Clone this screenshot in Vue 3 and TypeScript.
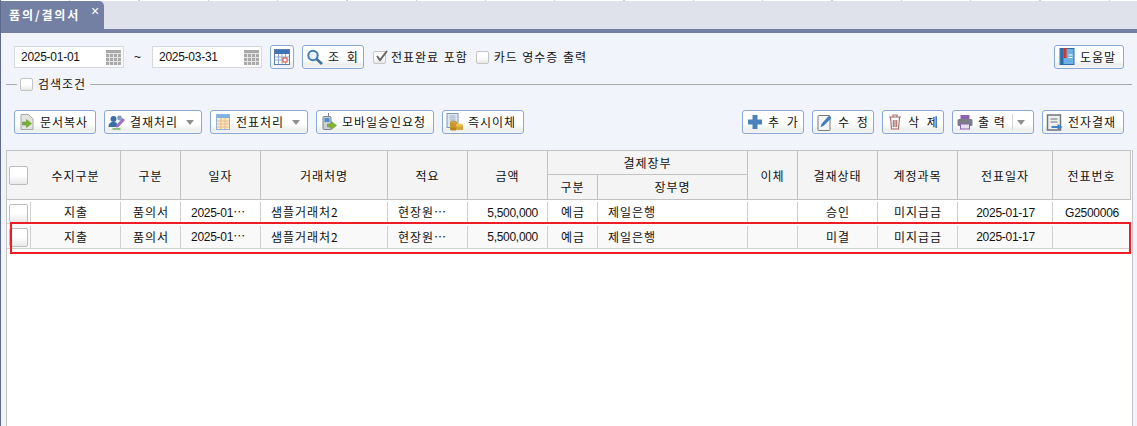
<script setup lang="ts">
interface Row {
  kind: string; type: string; date: string; vendor: string; memo: string; amount: string;
  pay: string; book: string; transfer: string; status: string; account: string; slipDate: string; slipNo: string;
}
const rows: Row[] = [
  { kind: '지출', type: '품의서', date: '2025-01⋯', vendor: '샘플거래처2', memo: '현장원⋯', amount: '5,500,000', pay: '예금', book: '제일은행', transfer: '', status: '승인', account: '미지급금', slipDate: '2025-01-17', slipNo: 'G2500006' },
  { kind: '지출', type: '품의서', date: '2025-01⋯', vendor: '샘플거래처2', memo: '현장원⋯', amount: '5,500,000', pay: '예금', book: '제일은행', transfer: '', status: '미결', account: '미지급금', slipDate: '2025-01-17', slipNo: '' },
]
const widths = [24, 90, 60, 80, 127, 80, 80, 50, 150, 50, 80, 80, 95, 78]
</script>

<template>
  <div class="page">
    <div class="tabbar">
      <div class="tab"><span>품의/결의서</span><i class="close">×</i></div>
    </div>
    <div class="strip"></div>

    <div class="row search">
      <div class="date">
        <span class="num">2025-01-01</span>
        <svg width="15" height="15" viewBox="0 0 15 15"><rect width="15" height="15" fill="#a9a9a9"/><path d="M0 3.5H15M0 7.5H15M0 11.5H15M3.5 3V15M7.5 3V15M11.5 3V15" stroke="#e4e4e4"/></svg>
      </div>
      <span class="tilde">~</span>
      <div class="date">
        <span class="num">2025-03-31</span>
        <svg width="15" height="15" viewBox="0 0 15 15"><rect width="15" height="15" fill="#a9a9a9"/><path d="M0 3.5H15M0 7.5H15M0 11.5H15M3.5 3V15M7.5 3V15M11.5 3V15" stroke="#e4e4e4"/></svg>
      </div>
      <button class="btn cal">
        <svg width="16" height="16" viewBox="0 0 16 16"><rect x=".5" y=".5" width="15" height="15" fill="#fff" stroke="#5b7db0"/><rect x="1" y="1" width="14" height="4" fill="#3f73b8"/><path d="M1 8H15M1 11H15M4.5 5V15M8 5V15M11.5 5V15" stroke="#8fa9cf"/><rect x="9" y="9" width="4" height="4" fill="#fff" stroke="#e0402c"/></svg>
      </button>
      <button class="btn w62 spaced">
        <svg width="17" height="17" viewBox="0 0 17 17"><circle cx="6.5" cy="6.5" r="4.7" fill="#eaf3fb" stroke="#3f7db5" stroke-width="2"/><path d="M10 10L15.5 15" stroke="#3f6f9f" stroke-width="2.6"/></svg>
        <span>조 회</span>
      </button>
      <label class="check first"><span class="box on"><svg width="15" height="15" viewBox="0 0 15 15"><path d="M3 7L6 11L13 2" fill="none" stroke="#666" stroke-width="2"/></svg></span><span>전표완료 포함</span></label>
      <label class="check second"><span class="box"></span><span>카드 영수증 출력</span></label>
      <button class="btn w70 push">
        <svg width="15" height="18" viewBox="0 0 15 18"><rect x=".5" y=".5" width="14" height="16" fill="#6db0e2" stroke="#2f6da8"/><rect x="1" y="1" width="3" height="15" fill="#2f6da8"/><rect x="4" y="0" width="3" height="10" fill="#e0302a"/><path d="M9 7H13M9 9.5H13" stroke="#fff"/></svg>
        <span>도움말</span>
      </button>
    </div>

    <div class="legend">
      <span class="dash"></span>
      <span class="box"></span>
      <span class="legend-text">검색조건</span>
      <span class="rule"></span>
    </div>

    <div class="row actions">
      <button class="btn w82">
        <svg width="17" height="18" viewBox="0 0 17 18"><path d="M2.5 1.5H10L14.5 6V16.5H2.5Z" fill="#e3e3e0" stroke="#a8a8a8"/><path d="M4 9H8V6.5L13 10.5L8 14.5V12H4Z" fill="#7cb334" stroke="#55882a" stroke-width=".5"/></svg>
        <span>문서복사</span>
      </button>
      <button class="btn w98">
        <svg width="17" height="16" viewBox="0 0 17 16"><circle cx="5" cy="5" r="3" fill="#3a6ea5"/><path d="M0 13C0 9 2 8 5 8S9 9 9 13Z" fill="#3a6ea5"/><circle cx="11" cy="4" r="2.4" fill="#7f9cc0"/><path d="M8 11L14 4L16.500 6L10 13L7.500 13.500Z" fill="#9a6fc0"/><path d="M4 15H12" stroke="#6fae5a" stroke-width="1.500"/></svg>
        <span>결재처리</span><i class="caret"></i>
      </button>
      <button class="btn w98">
        <svg width="14" height="16" viewBox="0 0 14 16"><rect x=".5" y=".5" width="13" height="15" fill="#fbe9c6" stroke="#8fb5dc"/><rect x="1" y="1" width="12" height="3" fill="#7fb2e2"/><path d="M1 7H13M1 10H13M1 13H13M5 4V15M9 4V15" stroke="#e7b98a"/></svg>
        <span>전표처리</span><i class="caret"></i>
      </button>
      <button class="btn w118">
        <svg width="17" height="18" viewBox="0 0 17 18"><rect x="2.500" y="3.500" width="8" height="13" rx="1" fill="#c9ced2" stroke="#7d858c"/><rect x="4" y="5" width="5" height="4" fill="#4a8fd1"/><path d="M8 0V3.500" stroke="#7d858c"/><path d="M7 11H11V8.500L16 12.500L11 16.500V14H7Z" fill="#84b52f" stroke="#5c8a20" stroke-width=".5"/></svg>
        <span>모바일승인요청</span>
      </button>
      <button class="btn w82">
        <svg width="17" height="18" viewBox="0 0 17 18"><rect x=".5" y=".5" width="11" height="14" fill="#dfe8f0" stroke="#7d97b5"/><path d="M3 3H9M3 5H9M3 7H9" stroke="#9fb0c0"/><ellipse cx="7" cy="10" rx="3.500" ry="2" fill="#d9a93e" stroke="#9a7420" stroke-width=".5"/><rect x="3.500" y="10" width="7" height="6" fill="#c9952e"/><ellipse cx="7" cy="16" rx="3.500" ry="1.500" fill="#b5851f"/><rect x="9.500" y="12" width="7" height="5" fill="#d8a436"/><ellipse cx="13" cy="12" rx="3.500" ry="1.500" fill="#eac35a"/></svg>
        <span>즉시이체</span>
      </button>

      <button class="btn w62 spaced push">
        <svg width="16" height="16" viewBox="0 0 16 16"><path d="M5.500 1H10.500V5.500H15V10.500H10.500V15H5.500V10.500H1V5.500H5.500Z" fill="#4a82bd"/></svg>
        <span>추 가</span>
      </button>
      <button class="btn w62 spaced">
        <svg width="15" height="17" viewBox="0 0 15 17"><rect x=".5" y="1.500" width="12" height="15" rx="1" fill="#f6f6f6" stroke="#7a7a7a"/><path d="M3 13L4 10L11.500 1.500L14 4L6 12Z" fill="#3f7fc4"/></svg>
        <span>수 정</span>
      </button>
      <button class="btn w62 spaced">
        <svg width="14" height="16" viewBox="0 0 14 16"><path d="M1 3H13M5 3V1H9V3M2.500 3.500L3.500 15H10.500L11.500 3.500M5.300 6V13M7 6V13M8.700 6V13" fill="none" stroke="#a36a68" stroke-width="1.100"/></svg>
        <span>삭 제</span>
      </button>
      <button class="btn w82">
        <svg width="17" height="16" viewBox="0 0 17 16"><rect x="4" y="1" width="9" height="5" fill="#8a63b5"/><rect x="1" y="5" width="15" height="7" rx="1.500" fill="#7b7f85"/><rect x="4" y="10" width="9" height="5" fill="#e8e2f0" stroke="#8a63b5"/></svg>
        <span>출 력</span><i class="sep"></i><i class="caret small"></i>
      </button>
      <button class="btn w82">
        <svg width="17" height="17" viewBox="0 0 17 17"><rect x="1" y="1" width="13" height="15" fill="#eef0f0" stroke="#6e7478" stroke-width="1.500"/><path d="M4 5H11M4 8H11" stroke="#6e7478"/><path d="M5 12H11V10L16 13L11 16V14H5Z" fill="#3f83c6"/></svg>
        <span>전자결재</span>
      </button>
    </div>

    <div class="grid-wrap">
      <table>
        <colgroup><col v-for="(w, i) in widths" :key="i" :width="w" /></colgroup>
        <thead>
          <tr>
            <th rowspan="2" class="nosep"><span class="box big"></span></th>
            <th rowspan="2">수지구분</th>
            <th rowspan="2">구분</th>
            <th rowspan="2">일자</th>
            <th rowspan="2">거래처명</th>
            <th rowspan="2">적요</th>
            <th rowspan="2">금액</th>
            <th colspan="2">결제장부</th>
            <th rowspan="2">이체</th>
            <th rowspan="2">결재상태</th>
            <th rowspan="2">계정과목</th>
            <th rowspan="2">전표일자</th>
            <th rowspan="2">전표번호</th>
          </tr>
          <tr>
            <th>구분</th>
            <th>장부명</th>
          </tr>
        </thead>
        <tbody>
          <tr v-for="(r, i) in rows" :key="i">
            <td><span class="box big"></span></td>
            <td class="c">{{ r.kind }}</td>
            <td class="c">{{ r.type }}</td>
            <td class="l"><span class="num">{{ r.date }}</span></td>
            <td class="l">{{ r.vendor }}</td>
            <td class="l">{{ r.memo }}</td>
            <td class="r"><span class="num amt">{{ r.amount }}</span></td>
            <td class="c">{{ r.pay }}</td>
            <td class="l">{{ r.book }}</td>
            <td class="c">{{ r.transfer }}</td>
            <td class="c">{{ r.status }}</td>
            <td class="c">{{ r.account }}</td>
            <td class="c"><span class="num">{{ r.slipDate }}</span></td>
            <td class="c"><span class="num">{{ r.slipNo }}</span></td>
          </tr>
        </tbody>
      </table>
      <div class="highlight"></div>
    </div>
  </div>
</template>

<style>
html, body { margin: 0; height: 100%; overflow: hidden; background: #f1f4fa; }
</style>

<style scoped>
.page {
  height: 426px;
  display: flex;
  flex-direction: column;
  background: #f1f4fa;
  border-left: 1px solid #5f6b8e;
  box-sizing: border-box;
  font: 12px/1 "Noto Sans CJK KR", "Liberation Sans", sans-serif;
  letter-spacing: .96px;
  color: #111;
}
.tabbar {
  height: 29px;
  box-sizing: border-box;
  padding-top: 1px;
  background:
    repeating-linear-gradient(90deg, #fff 0 68px, #c9ccd3 68px 69.3px) top left / 100% 1px no-repeat,
    #dfe2ea;
  flex: none;
}
.tab {
  width: 103px;
  height: 28px;
  box-sizing: border-box;
  background: #7480a3;
  border-radius: 0 5px 0 0;
  color: #fff;
  font-weight: 700;
  letter-spacing: 1.9px;
  padding: 8px 0 0 8px;
  display: flex;
  justify-content: space-between;
}
.close { font: 14px/1 "Liberation Sans", sans-serif; margin: -5px 3px 0 0; }
.strip { height: 4px; background: #7480a3; flex: none; }

.row { display: flex; align-items: center; padding: 0 13px 0 13px; flex: none; }
.search { margin-top: 12px; height: 24px; }
.actions { margin-top: 19px; height: 24px; gap: 8px; }

.num { font-family: "Liberation Sans", "Noto Sans CJK KR", sans-serif; letter-spacing: -.27px; }
.amt { letter-spacing: -.3px; }

.date {
  width: 110px;
  height: 22px;
  box-sizing: border-box;
  background: #fff;
  border: 1px solid #d5d8dd;
  display: flex;
  align-items: center;
  justify-content: space-between;
  padding: 0 2px 0 6px;
}
.tilde { width: 28px; text-align: center; font: 12px/1 "Liberation Sans", sans-serif; }

.btn {
  height: 24px;
  box-sizing: border-box;
  margin: 0;
  padding: 0 0 0 3px;
  display: flex;
  align-items: center;
  gap: 4px;
  background: linear-gradient(#fff 0 60%, #eceeee 85%, #f4f5f5 100%);
  border: 1px solid #8ba9d6;
  border-radius: 3px;
  font: inherit;
  letter-spacing: inherit;
  color: inherit;
  flex: none;
}
.btn svg { flex: none; width: 18px; }
.btn.push { margin-left: auto; }
.btn.cal { width: 24px; padding: 0; justify-content: center; margin: 0 8px; }
.btn.cal svg { width: 16px; }
.w62 { width: 62px; }
.w70 { width: 70px; }
.w82 { width: 82px; }
.w98 { width: 98px; }
.w118 { width: 118px; }
.spaced { word-spacing: 3px; }
.caret {
  width: 0; height: 0;
  border: 4.5px solid transparent;
  border-top: 5px solid #8f8f8f;
  border-bottom: 0;
  margin-left: 4px;
}
.sep { width: 1px; height: 16px; background: #d4d4d4; margin-left: 2px; }
.caret.small { margin-left: 0; }

.check { display: flex; align-items: center; gap: 5px; word-spacing: 1px; }
.first { margin-left: 9px; }
.second { margin-left: 8px; }

.box {
  display: inline-block;
  width: 13px;
  height: 13px;
  box-sizing: border-box;
  border: 1px solid #c4c4c4;
  border-radius: 2px;
  background: linear-gradient(#fff 50%, #e8e8e8);
  position: relative;
  vertical-align: middle;
  flex: none;
}
.box.on svg { position: absolute; left: 0; top: -3px; }
.box.big { width: 19px; height: 19px; border-color: #bdbdbd; }

.legend { display: flex; align-items: center; height: 14px; margin-top: 8px; padding: 0 5px; flex: none; }
.dash { width: 11px; height: 1px; background: #ababab; margin-right: 3px; }
.legend-text { margin: 0 4px 0 5px; }
.rule { flex: 1; height: 1px; background: #ababab; }

.grid-wrap {
  position: relative;
  margin: 16px 4px 0 5px;
  flex: 1;
  background: #fff;
  border-left: 1px solid #c4c4c4;
  border-right: 1px solid #c4c4c4;
}
table { border-collapse: separate; border-spacing: 0; table-layout: fixed; width: 1124px; }
th {
  background: #f4f4f4;
  border-bottom: 1px solid #c2c2c2;
  border-right: 1px solid #c2c2c2;
  height: 25px;
  box-sizing: border-box;
  font-weight: 400;
  padding: 0;
  text-align: center;
}
th[rowspan] { padding-top: 1px; }
thead tr:first-child th { border-top: 1px solid #c2c2c2; height: 25px; }
th.nosep { border-right: 0; text-align: left; padding-left: 2px; }
td {
  height: 24px;
  box-sizing: border-box;
  padding: 1px 0 0;
  border-bottom: 1px solid #cfcfcf;
  background: linear-gradient(#d0d0d0, #d0d0d0) right 2px / 1px calc(100% - 2px) no-repeat;
  white-space: nowrap;
  overflow: hidden;
}
tbody tr:nth-child(2) td { height: 25px; background-color: #f9f9f9; }
td:last-child { background-image: none; }
td:first-child { padding: 4px 0 0 2px; vertical-align: top; line-height: 0; }
.c { text-align: center; }
.l { text-align: left; padding-left: 10px; }
.r { text-align: right; padding-right: 10px; }
.highlight {
  position: absolute;
  left: 3px;
  top: 72px;
  width: 1121px;
  height: 32px;
  box-sizing: border-box;
  border: 2px solid #ee1c25;
  pointer-events: none;
}
</style>
